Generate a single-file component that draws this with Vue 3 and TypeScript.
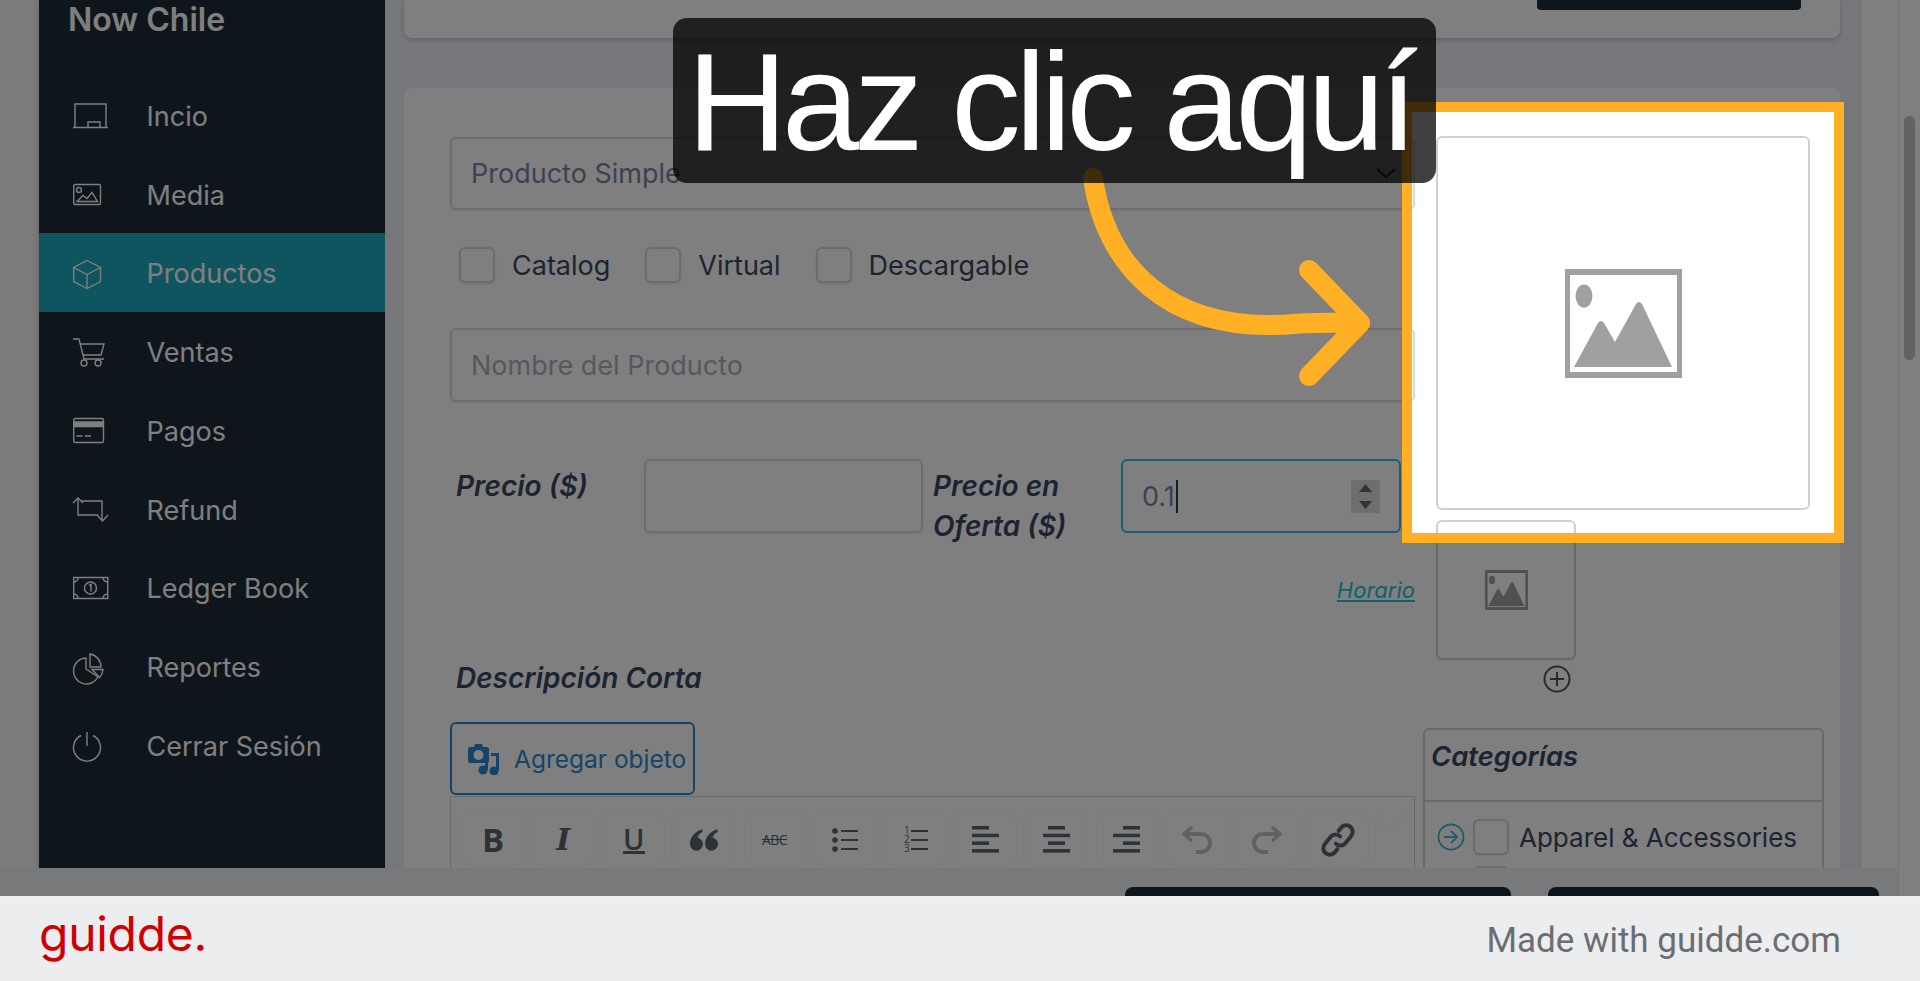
<template>
  <div class="stage">
    <div class="app">
      <div class="gutter"></div>

      <!-- Sidebar -->
      <aside class="sidebar">
        <div class="brand">Now Chile</div>
        <nav class="menu">
          <a v-for="item in menu" :key="item.label" class="menu-item" :class="{ active: item.active }">
            <span class="menu-icon">
              <svg width="36" height="30" viewBox="0 0 36 30" fill="none" stroke="currentColor" stroke-width="1.4">
                <path v-for="d in item.paths" :key="d" :d="d" />
              </svg>
            </span>
            <span>{{ item.label }}</span>
          </a>
        </nav>
      </aside>

      <!-- Main -->
      <main class="main">
        <div class="top-card">
          <div class="top-btn"></div>
        </div>

        <section class="card">
          <div class="col-left">
            <div class="select">
              <span>Producto Simple</span>
              <svg width="20" height="10" viewBox="0 0 20 10" fill="none" stroke="#333" stroke-width="2">
                <path d="M1 1l9 8 9-8" />
              </svg>
            </div>

            <div class="checks">
              <label v-for="c in productTypes" :key="c" class="check">
                <span class="box"></span>
                <span>{{ c }}</span>
              </label>
            </div>

            <input class="text-input" placeholder="Nombre del Producto" />

            <div class="price-row">
              <label class="price-label">Precio ($)</label>
              <input class="text-input price-input" />
              <label class="price-label second">Precio en<br />Oferta ($)</label>
              <div class="offer-input">
                <span class="offer-value">0.1</span><span class="caret"></span>
                <span class="spinner">
                  <svg width="13" height="25" viewBox="0 0 13 25" fill="#666">
                    <path d="M6.5 0L13 8H0zM0 17h13l-6.5 8z" />
                  </svg>
                </span>
              </div>
            </div>

            <div class="schedule"><a class="schedule-link">Horario</a></div>

            <div class="section-title">Descripción Corta</div>

            <button class="media-btn">
              <svg width="31" height="32" viewBox="0 0 31 32" fill="currentColor" fill-rule="evenodd">
                <path d="M2 4h4l1-3h7l1 3h4a2 2 0 0 1 2 2v12a2 2 0 0 1-2 2H2a2 2 0 0 1-2-2V6a2 2 0 0 1 2-2zM10.500 7a5 5 0 1 0 0 10 5 5 0 0 0 0-10z" />
                <path d="M23 10h8v18h-3V13h-5zM17 19h3v8h-3z" />
                <circle cx="15" cy="27" r="4.500" />
                <circle cx="26" cy="28" r="4.500" />
              </svg>
              <span>Agregar objeto</span>
            </button>

            <div class="editor">
              <div class="toolbar">
                <button class="tool"><span class="t-bold">B</span></button>
                <button class="tool"><span class="t-italic">I</span></button>
                <button class="tool"><span class="t-under">U</span></button>
                <button class="tool">
                  <svg width="28" height="24" viewBox="0 0 26 22" fill="currentColor">
                    <path d="M11 1C5 3 0 8 0 15a6 6 0 1 0 7-6c0-2 2-4 5-6zM25 1c-6 2-11 7-11 14a6 6 0 1 0 7-6c0-2 2-4 5-6z" />
                  </svg>
                </button>
                <button class="tool"><span class="t-strike">ABC</span></button>
                <button class="tool">
                  <svg width="26" height="24" viewBox="0 0 26 24" fill="currentColor">
                    <circle cx="3" cy="3" r="2.800" /><circle cx="3" cy="12" r="2.800" /><circle cx="3" cy="21" r="2.800" />
                    <path d="M9 2h17v2H9zM9 11h17v2H9zM9 20h17v2H9z" />
                  </svg>
                </button>
                <button class="tool">
                  <span class="ol-nums"><span>1</span><span>2</span><span>3</span></span>
                  <svg width="17" height="20" viewBox="0 0 17 20" fill="currentColor">
                    <path d="M0 0h17v2H0zM0 9h17v2H0zM0 18h17v2H0z" />
                  </svg>
                </button>
                <button class="tool" v-for="rows in aligns" :key="rows.join()">
                  <svg width="27" height="27" viewBox="0 0 27 27" fill="currentColor">
                    <rect v-for="(r, i) in rows" :key="i" :x="r[0]" :y="i * 7.700" :width="r[1]" height="3.500" />
                  </svg>
                </button>
                <button class="tool muted">
                  <svg width="32" height="28" viewBox="0 0 32 28" fill="none" stroke="currentColor" stroke-width="4">
                    <path d="M3 8h17a9 9 0 0 1 0 18h-5" />
                    <path d="M11 1L3 8l8 7" stroke-width="3.500" />
                  </svg>
                </button>
                <button class="tool muted">
                  <svg width="32" height="28" viewBox="0 0 32 28" fill="none" stroke="currentColor" stroke-width="4">
                    <path d="M29 8H12a9 9 0 0 0 0 18h5" />
                    <path d="M21 1l8 7-8 7" stroke-width="3.500" />
                  </svg>
                </button>
                <button class="tool">
                  <svg width="34" height="34" viewBox="0 0 24 24" fill="none" stroke="currentColor" stroke-width="2.800" stroke-linecap="round">
                    <path d="M10.500 14.500a4.500 4.500 0 0 0 6.500 0l4-5a4.500 4.500 0 0 0-6.500-6.500l-2 2.500" />
                    <path d="M13.500 9.500a4.500 4.500 0 0 0-6.500 0l-4 5a4.500 4.500 0 0 0 6.500 6.500l2-2.500" />
                  </svg>
                </button>
                <div class="tool-stub"></div>
              </div>
            </div>
          </div>

          <div class="col-right">
            <div class="image-box">
              <svg width="117" height="109" viewBox="0 0 117 109">
                <path fill="#a0a0a0" fill-rule="evenodd" d="M0 0h117v109H0zM5 6v97h107V6z" />
                <ellipse cx="19" cy="27" rx="8.500" ry="11.500" fill="#a0a0a0" />
                <path fill="#a0a0a0" d="M9 98l24-44q3-4 6 0l11 19 21-38q3-4 6 0l30 63z" />
              </svg>
            </div>
            <div class="image-thumb">
              <svg width="43" height="40" viewBox="0 0 117 109">
                <path fill="#a0a0a0" fill-rule="evenodd" d="M0 0h117v109H0zM7 8v93h103V8z" />
                <ellipse cx="19" cy="27" rx="8.500" ry="11.500" fill="#a0a0a0" />
                <path fill="#a0a0a0" d="M9 98l24-44q3-4 6 0l11 19 21-38q3-4 6 0l30 63z" />
              </svg>
            </div>
            <div class="add-image">
              <svg width="28" height="28" viewBox="0 0 28 28" fill="none" stroke="#555" stroke-width="2">
                <circle cx="14" cy="14" r="12.500" />
                <path d="M14 7v14M7 14h14" />
              </svg>
            </div>

            <div class="categories">
              <div class="cat-title">Categorías</div>
              <div class="cat-list">
                <div class="cat-row">
                  <svg width="28" height="28" viewBox="0 0 28 28" fill="none" stroke="#38b8cc" stroke-width="1.800">
                    <circle cx="14" cy="14" r="12.500" />
                    <path d="M7 14h13M14 8l6 6-6 6" />
                  </svg>
                  <span class="box"></span>
                  <span class="cat-name">Apparel &amp; Accessories</span>
                </div>
                <div class="cat-row second-row">
                  <span class="spacer"></span>
                  <span class="box"></span>
                </div>
              </div>
            </div>
          </div>
        </section>
      </main>

      <div class="rail">
        <div class="rail-track">
          <div class="thumb"></div>
        </div>
      </div>

      <!-- Fixed action bar -->
      <div class="action-bar">
        <div class="action-btn first"></div>
        <div class="action-btn second-btn"></div>
      </div>

      <!-- Guide annotation -->
      <div class="highlight"></div>
      <svg class="arrow" width="1920" height="896" viewBox="0 0 1920 896" fill="none" stroke="#ffb024" stroke-width="20" stroke-linecap="round" stroke-linejoin="round">
        <path d="M1093 178C1105 262 1165 337 1300 323.500C1325 322 1345 323 1360 323" />
        <path d="M1309 270L1360 323L1309 376" />
      </svg>
      <div class="callout">Haz clic aquí</div>
    </div>

    <footer class="footer">
      <span class="logo">guidde.</span>
      <span class="made">Made with guidde.com</span>
    </footer>
  </div>
</template>

<script setup lang="ts">
interface MenuItem {
  label: string
  paths: string[]
  active?: boolean
}

const menu: MenuItem[] = [
  { label: 'Incio', paths: ['M2 26V3h31v23', 'M0 26.500h35', 'M15 26v-5h12v5'] },
  {
    label: 'Media',
    paths: [
      'M2 4.500h24a1.500 1.500 0 0 1 1.500 1.500v17a1.500 1.500 0 0 1-1.500 1.500H2A1.500 1.500 0 0 1 .7 23V6A1.500 1.500 0 0 1 2 4.500z',
      'M4 21.500l6-6 4 3 5-6 5.500 9z',
      'M3.500 10a2.500 2.500 0 1 0 5 0a2.500 2.500 0 1 0-5 0'
    ]
  },
  {
    label: 'Productos',
    active: true,
    paths: ['M14 1.500L27.500 8.500v14L14 29.500.7 22.500v-14z', 'M.7 8.500L14 15.500l13.500-7', 'M14 15.500v14']
  },
  {
    label: 'Ventas',
    paths: [
      'M0 1h6l5 20h20',
      'M7 6h24l-3 11H10',
      'M8 25a3 3 0 1 0 6 0a3 3 0 1 0-6 0',
      'M22 25a3 3 0 1 0 6 0a3 3 0 1 0-6 0'
    ]
  },
  {
    label: 'Pagos',
    paths: [
      'M2 2.500h27a1.500 1.500 0 0 1 1.500 1.500v21a1.500 1.500 0 0 1-1.500 1.500H2A1.500 1.500 0 0 1 .7 25V4A1.500 1.500 0 0 1 2 2.500z',
      'M1 6h29M1 7.500h29M1 9h29M1 10.500h29',
      'M3.500 20h6M12 20h6'
    ]
  },
  { label: 'Refund', paths: ['M0 8l5-5 5 5', 'M5 3v17h20', 'M8 6h21v19', 'M24 20l5.500 6 5.500-6'] },
  {
    label: 'Ledger Book',
    paths: [
      'M.7 3.500h34v21H.7z',
      'M11.500 14a6 6 0 1 0 12 0a6 6 0 1 0-12 0',
      'M16 11.500l2-1v7',
      'M.7 8a5 5 0 0 0 4.500-4.500',
      'M30 3.500a5 5 0 0 0 4.700 4.500',
      'M.7 20a5 5 0 0 1 4.500 4.500',
      'M30 24.500a5 5 0 0 1 4.700-4.500'
    ]
  },
  {
    label: 'Reportes',
    paths: [
      'M13 5a13 13 0 1 0 12 19L13 16z',
      'M17 1a13 13 0 0 1 11 13H17z',
      'M19 16.500h11a13 13 0 0 1-3.500 8z'
    ]
  },
  { label: 'Cerrar Sesión', paths: ['M8 4.500a13.500 13.500 0 1 0 12 0', 'M14 1v14'] }
]

const productTypes = ['Catalog', 'Virtual', 'Descargable']

// x offset and width of each bar, one entry per alignment button
const aligns: number[][][] = [
  [[0, 17], [0, 27], [0, 17], [0, 27]],
  [[5, 17], [0, 27], [5, 17], [0, 27]],
  [[10, 17], [0, 27], [10, 17], [0, 27]]
]
</script>

<style scoped>
.stage {
  width: 1920px;
  height: 981px;
  display: flex;
  flex-direction: column;
  overflow: hidden;
  font-family: Inter, "Liberation Sans", sans-serif;
  color: #3a4660;
}

.app {
  position: relative;
  flex: 1;
  min-height: 0;
  display: flex;
  overflow: hidden;
  background: #f6f6f6;
}

.gutter {
  width: 39px;
  flex: none;
}

/* Sidebar */
.sidebar {
  width: 346px;
  flex: none;
  background: #1c2c38;
  color: #fff;
  box-shadow: 0 0 6px rgba(0, 0, 0, 0.2);
}

.brand {
  padding: 0 0 0 29px;
  height: 75.500px;
  font-size: 32px;
  font-weight: 600;
  line-height: 40px;
}

.menu-item {
  display: flex;
  align-items: center;
  height: 78.750px;
  box-sizing: border-box;
  padding: 3px 0 0 34px;
  font-size: 27px;
}

.menu-item.active {
  background: #1caac0;
}

.menu-icon {
  width: 73.500px;
  flex: none;
  display: flex;
}

.menu-icon svg {
  overflow: visible;
}

/* Main */
.main {
  width: 1475px;
  flex: none;
  padding: 0 20px 0 19px;
  box-sizing: border-box;
  background: #eceef4;
}

.top-card {
  height: 38px;
  background: #fff;
  border-radius: 0 0 8px 8px;
  box-shadow: 0 2px 5px rgba(0, 0, 0, 0.18);
  display: flex;
  justify-content: flex-end;
  padding-right: 39px;
  margin-bottom: 50px;
}

.top-btn {
  width: 264px;
  height: 10px;
  background: #1c2c38;
  border-radius: 0 0 4px 4px;
}

.card {
  background: #fff;
  border-radius: 8px 8px 0 0;
  padding: 49px 16px 0 46px;
  display: flex;
  gap: 8px;
  height: 900px;
}

.col-left {
  width: 965px;
  flex: none;
}

.col-right {
  width: 401px;
  flex: none;
  margin-top: -1px;
}

/* Form */
.select,
.text-input {
  display: flex;
  align-items: center;
  justify-content: space-between;
  width: 100%;
  height: 74px;
  box-sizing: border-box;
  padding: 0 19px;
  border: 2px solid #dadada;
  border-radius: 6px;
  box-shadow: 0 1px 3px rgba(0, 0, 0, 0.08);
  background: #fff;
  font-family: inherit;
  font-size: 27px;
  color: #7a84a0;
  outline: none;
}

.select {
  height: 73px;
}

.select svg {
  margin: -2px -2px 0 0;
}

.text-input::placeholder {
  color: #acb0c0;
  opacity: 1;
}

.checks {
  display: flex;
  gap: 35px;
  padding-left: 9px;
  margin: 37px 0 45px;
  height: 36px;
}

.check {
  display: flex;
  align-items: center;
  gap: 17px;
  font-size: 27px;
  color: #3a4660;
}

.box {
  display: block;
  width: 36px;
  height: 36px;
  flex: none;
  box-sizing: border-box;
  border: 2px solid #d8d8d8;
  border-radius: 6px;
  background: #fff;
  box-shadow: 0 1px 3px rgba(0, 0, 0, 0.1);
}

.price-row {
  display: flex;
  margin-top: 57px;
  height: 87px;
}

.price-label {
  width: 188px;
  flex: none;
  padding: 7px 0 0 6px;
  box-sizing: content-box;
  font-size: 28px;
  line-height: 40px;
  font-weight: 600;
  font-style: italic;
}

.price-label.second {
  width: 198px;
  padding-left: 10px;
  box-sizing: border-box;
}

.price-input {
  width: 279px;
  flex: none;
}

.offer-input {
  width: 280px;
  height: 74px;
  flex: none;
  box-sizing: border-box;
  display: flex;
  align-items: center;
  padding: 0 19px 0 19px;
  border: 2px solid #38b8e8;
  border-radius: 6px;
  font-size: 27px;
  color: #7a84a0;
}

.caret {
  width: 2px;
  height: 33px;
  margin-left: 1px;
  background: #2a3a50;
}

.spinner {
  margin-left: auto;
  width: 29px;
  height: 33px;
  background: #dcdcdc;
  display: flex;
  align-items: center;
  justify-content: center;
}

.schedule {
  display: flex;
  justify-content: flex-end;
  margin-top: 29px;
  line-height: 30px;
}

.schedule-link {
  font-size: 22px;
  font-style: italic;
  color: #1cc4d6;
  text-decoration: underline;
}

.section-title {
  margin: 57px 0 28px 6px;
  font-size: 28px;
  line-height: 32px;
  font-weight: 600;
  font-style: italic;
}

.media-btn {
  display: flex;
  align-items: center;
  gap: 15px;
  width: 245px;
  height: 73px;
  padding: 0 0 0 16px;
  box-sizing: border-box;
  border: 2px solid #2c88d0;
  border-radius: 6px;
  background: #fff;
  color: #2c88d0;
  font-family: inherit;
  font-size: 24.500px;
  white-space: nowrap;
}

.media-btn svg {
  flex: none;
}

.editor {
  margin-top: 1px;
  border: 1px solid #d8d8d8;
  padding: 16px 11px;
  height: 200px;
}

.toolbar {
  display: flex;
  gap: 8.400px;
}

.tool {
  width: 62px;
  height: 53px;
  flex: none;
  display: flex;
  align-items: center;
  justify-content: center;
  padding: 0;
  border: 1px solid #f8f8f8;
  border-radius: 8px;
  background: #fff;
  color: #5a646f;
  font-family: "Open Sans", sans-serif;
}

.tool.muted {
  color: #bfc4c8;
}

.tool-stub {
  width: 24px;
  height: 15px;
  box-sizing: border-box;
  border: 1px solid #f4f4f4;
  border-top: 0;
  border-radius: 0 0 12px 12px;
}

.t-bold {
  font-size: 33px;
  font-weight: 700;
  line-height: 1;
}

.t-italic {
  font-family: "DejaVu Serif", serif;
  font-size: 30px;
  font-weight: 700;
  font-style: italic;
  line-height: 1;
}

.t-under {
  font-size: 29px;
  font-weight: 600;
  line-height: 25px;
  border-bottom: 3px solid currentColor;
}

.t-strike {
  font-size: 14px;
  text-decoration: line-through;
  letter-spacing: -0.5px;
}

.ol-nums {
  display: flex;
  flex-direction: column;
  width: 9px;
  font-size: 10px;
  line-height: 9px;
}

/* Right column */
.image-box {
  margin-left: 13px;
  width: 374px;
  height: 374px;
  box-sizing: border-box;
  border: 2px solid #d0d0d0;
  border-radius: 6px;
  display: flex;
  align-items: center;
  justify-content: center;
}

.image-thumb {
  margin: 10px 0 0 13px;
  width: 140px;
  height: 140px;
  box-sizing: border-box;
  border: 2px solid #d0d0d0;
  border-radius: 6px;
  display: flex;
  align-items: center;
  justify-content: center;
}

.add-image {
  margin: 5px 0 0 120px;
  height: 28px;
  display: flex;
}

.categories {
  margin-top: 35px;
  border: 2px solid #d4d4d4;
  border-radius: 6px 6px 0 0;
}

.cat-title {
  height: 72px;
  padding: 8px 0 0 6px;
  box-sizing: border-box;
  font-size: 27.400px;
  line-height: 36px;
  font-weight: 600;
  font-style: italic;
  border-bottom: 2px solid #d4d4d4;
}

.cat-list {
  padding: 17px 0 0 12px;
}

.cat-row {
  display: flex;
  align-items: center;
  gap: 8px;
  font-size: 26px;
  color: #3a4660;
}

.cat-name {
  margin-left: 2px;
}

.second-row {
  margin-top: 11px;
}

.spacer {
  width: 28px;
}

/* Right rail */
.rail {
  flex: 1;
  background: #fff;
  border-left: 1px solid #e4e4e4;
  display: flex;
  justify-content: flex-end;
}

.rail-track {
  width: 22px;
  border-left: 1px solid #e8e8e8;
  padding: 116px 5px 0 5px;
  box-sizing: border-box;
}

.thumb {
  height: 244px;
  background: #c4c4c4;
  border-radius: 6px;
}

/* Action bar */
.action-bar {
  position: absolute;
  left: 0;
  right: 22px;
  bottom: 0;
  height: 28px;
  background: #f0f2f6;
  display: flex;
  justify-content: flex-end;
  gap: 37px;
  padding: 19px 19px 0 0;
  box-sizing: border-box;
  overflow: hidden;
}

.action-btn {
  height: 40px;
  background: #1c2c38;
  border-radius: 8px 8px 0 0;
}

.action-btn.first {
  width: 386px;
}

.action-btn.second-btn {
  width: 331px;
}

/* Annotation layer */
.highlight {
  position: absolute;
  left: 1402px;
  top: 102px;
  width: 442px;
  height: 441px;
  box-sizing: border-box;
  border: 10px solid #ffb024;
  box-shadow: 0 0 0 2400px rgba(0, 0, 0, 0.5);
}

.arrow {
  position: absolute;
  left: 0;
  top: 0;
}

.callout {
  position: absolute;
  left: 673px;
  top: 18px;
  width: 763px;
  height: 165px;
  box-sizing: border-box;
  padding-left: 14px;
  border-radius: 14px;
  background: rgba(0, 0, 0, 0.75);
  color: #fff;
  font-family: "Liberation Sans", Arial, sans-serif;
  font-size: 139px;
  letter-spacing: -5.400px;
  line-height: 167px;
  white-space: nowrap;
}

/* Footer */
.footer {
  height: 85px;
  flex: none;
  display: flex;
  align-items: center;
  justify-content: space-between;
  padding: 0 79px 0 39px;
  background: #ecedef;
  border-top: 1px solid #f2f2f4;
  box-sizing: border-box;
}

.logo {
  font-family: Inter, sans-serif;
  font-size: 48px;
  font-weight: 400;
  letter-spacing: -0.300px;
  color: #d10000;
  margin-top: -12px;
}

.made {
  font-family: Roboto, sans-serif;
  font-size: 35px;
  color: #6a6e73;
  margin-top: 2px;
}
</style>

<style>
html,
body {
  margin: 0;
  overflow: hidden;
}
</style>
